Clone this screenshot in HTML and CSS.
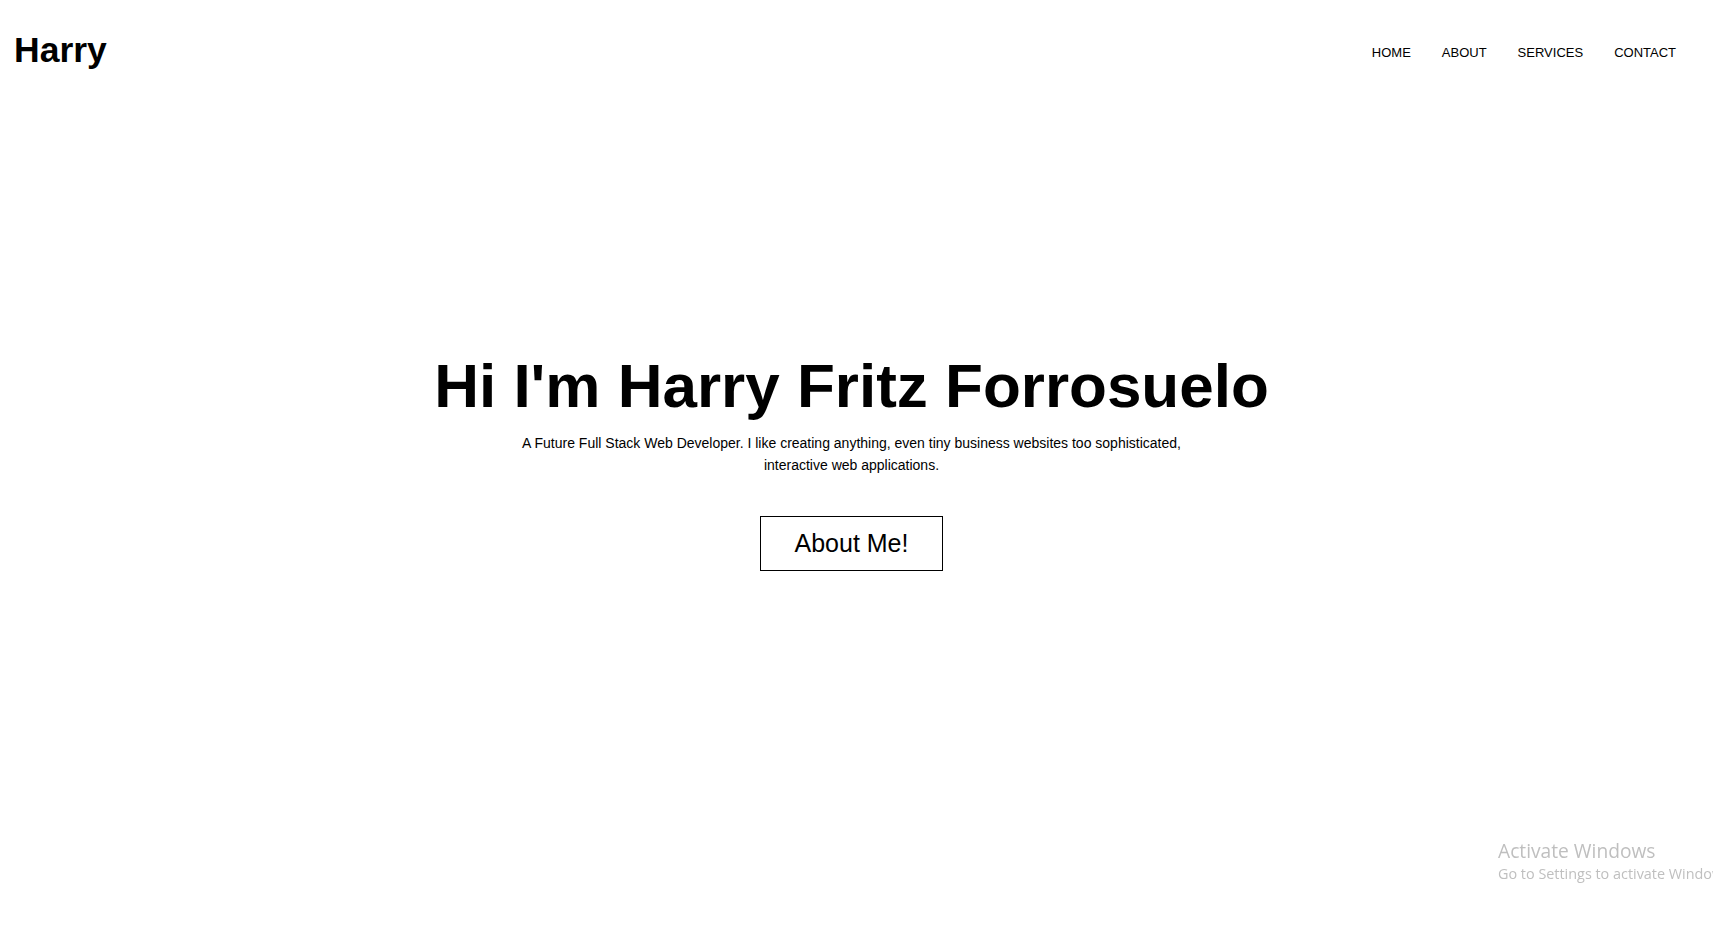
FILE: index.html
```html
<!DOCTYPE html>
<html lang="en">
<head>
<meta charset="utf-8">
<title>Harry</title>
<link rel="stylesheet" href="styles.css">
</head>
<body>
<header class="site-header">
  <h2 class="logo">Harry</h2>
  <nav>
    <ul class="nav-list">
      <li><a href="#" class="nav-link">HOME</a></li>
      <li><a href="#" class="nav-link">ABOUT</a></li>
      <li><a href="#" class="nav-link">SERVICES</a></li>
      <li><a href="#" class="nav-link">CONTACT</a></li>
    </ul>
  </nav>
</header>
<main class="hero">
  <h1 class="hero-title">Hi I'm Harry Fritz Forrosuelo</h1>
  <p class="hero-text">A Future Full Stack Web Developer. I like creating anything, even tiny business websites too sophisticated, interactive web applications.</p>
  <a href="#" class="btn">About Me!</a>
</main>
<div class="watermark">
  <div class="wm-title">Activate Windows</div>
  <div class="wm-sub">Go to Settings to activate Windows.</div>
</div>
</body>
</html>
```
FILE: styles.css
```css
html, body {
  margin: 0;
  padding: 0;
  overflow: hidden;
  background: #fff;
}
body {
  font-family: "Liberation Sans", Arial, sans-serif;
  color: #000;
}
.site-header {
  display: flex;
  justify-content: space-between;
  align-items: flex-start;
  padding: 30px 37px 0 14px;
}
.logo {
  margin: 0;
  font-size: 35.5px;
  line-height: 40px;
  font-weight: 700;
}
.nav-list {
  display: flex;
  gap: 31px;
  list-style: none;
  margin: 13px 0 0;
  padding: 0;
}
.nav-link {
  font-size: 13px;
  line-height: 15px;
  color: #000;
  text-decoration: none;
}
.hero {
  display: flex;
  flex-direction: column;
  align-items: center;
  padding: 281px 10px 0 0;
  text-align: center;
}
.hero-title {
  margin: 0;
  font-size: 62px;
  line-height: 70px;
  font-weight: 700;
}
.hero-text {
  margin: 11px 0 0;
  max-width: 680px;
  font-size: 14px;
  line-height: 22px;
}
.btn {
  margin-top: 40px;
  padding: 13px 34px;
  border: 1px solid #000;
  font-size: 25px;
  line-height: 27px;
  color: #000;
  text-decoration: none;
  background: #fff;
}
.watermark {
  position: fixed;
  left: 1498px;
  top: 839px;
  white-space: nowrap;
  font-family: "Open Sans", "Noto Sans", sans-serif;
  color: #bfbfbf;
}
.wm-title {
  font-size: 19.2px;
  line-height: 24px;
  font-weight: 400;
}
.wm-sub {
  font-size: 14.4px;
  line-height: 21px;
}
```
